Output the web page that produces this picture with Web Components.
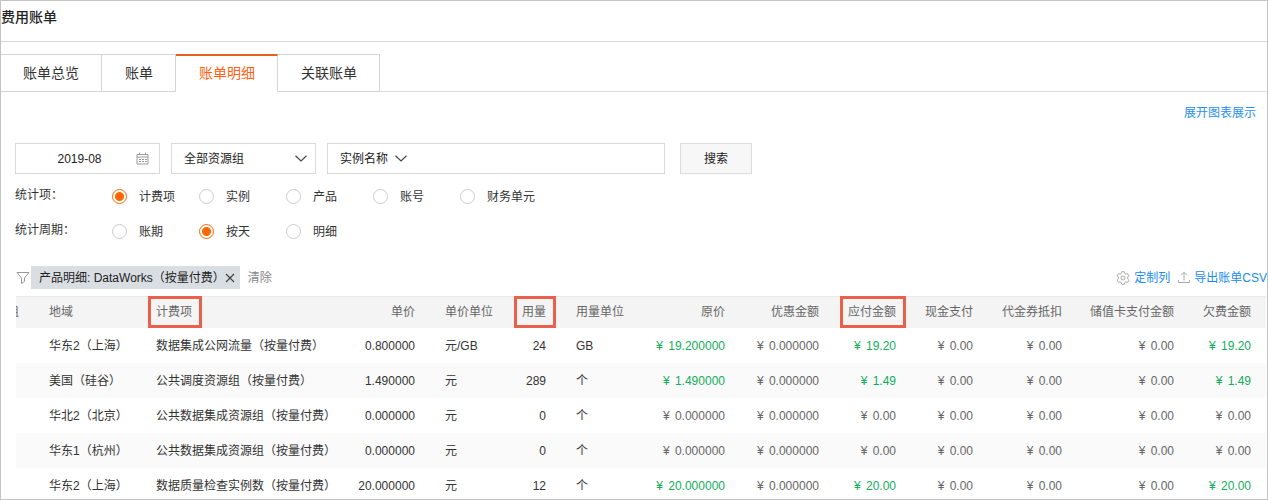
<!DOCTYPE html>
<html lang="zh-CN">
<head>
<meta charset="utf-8">
<title>费用账单</title>
<style>
body {
    margin: 0;
    font: 12px/20px "Liberation Sans", "Noto Sans CJK SC", sans-serif;
    color: #333;
    background: #fff;
}
</style>
</head>
<body>
<bill-page heading="费用账单">
    <bill-tabs slot="tabs">
        <bill-tab>账单总览</bill-tab>
        <bill-tab>账单</bill-tab>
        <bill-tab active>账单明细</bill-tab>
        <bill-tab>关联账单</bill-tab>
    </bill-tabs>
    <bill-search></bill-search>
    <radio-row label="统计项：" name="item" options="计费项,实例,产品,账号,财务单元" value="计费项"></radio-row>
    <radio-row label="统计周期：" name="period" options="账期,按天,明细" value="按天"></radio-row>
    <bill-toolbar>产品明细: DataWorks（按量付费）</bill-toolbar>
    <bill-table></bill-table>
</bill-page>

<script>
function attach(element, html) {
    const templateNode = document.createElement('template');
    templateNode.innerHTML = html;
    const shadowRoot = element.attachShadow({ mode: "open" });
    shadowRoot.appendChild(templateNode.content.cloneNode(true));
    return shadowRoot;
}

class BillPage extends HTMLElement {
    constructor() {
        super();
        const root = attach(this, `
            <style>
            :host {
                display: block;
                box-sizing: border-box;
                height: 100vh;
                border: 1px solid #c4c4c4;
                overflow: hidden;
            }

            h1 {
                margin: 0 0 12px;
                padding: 6px 0 14px;
                border-bottom: 1px solid #d6d6d6;
                font-size: 14px;
                line-height: 20px;
                font-weight: 500;
                color: #222;
            }

            .more {
                display: flex;
                justify-content: flex-end;
                padding: 11px 11px 20px;
            }

            a {
                color: #2a8fee;
                text-decoration: none;
            }

            main {
                padding-left: 14px;
            }
            </style>
            <h1></h1>
            <slot name="tabs"></slot>
            <div class="more"><a href="#chart">展开图表展示</a></div>
            <main><slot></slot></main>
        `);
        root.querySelector('h1').textContent = this.getAttribute('heading');
    }
}

class BillTabs extends HTMLElement {
    constructor() {
        super();
        attach(this, `
            <style>
            :host { display: block; }

            nav {
                display: flex;
                margin-left: -1px;
                background: linear-gradient(#dcdcdc, #dcdcdc) bottom / 100% 1px no-repeat;
            }
            </style>
            <nav><slot></slot></nav>
        `);
    }
}

class BillTab extends HTMLElement {
    constructor() {
        super();
        attach(this, `
            <style>
            :host {
                display: block;
                box-sizing: border-box;
                height: 38px;
                border: solid #d4d4d4;
                border-width: 1px 1px 1px 0;
            }

            :host([active]) {
                border-top: 2px solid #e8601c;
                border-bottom-color: #fff;
                background: #fff;
            }

            a {
                display: block;
                padding: 0 22px 0 23px;
                font-size: 14px;
                line-height: 36px;
                color: #333;
                text-decoration: none;
            }

            :host([active]) a {
                line-height: 34px;
                color: #ff6210;
            }
            </style>
            <a href="#tab"><slot></slot></a>
        `);
    }
}

const CHEVRON = `<svg width="12" height="7" viewBox="0 0 12 7" fill="none" stroke="#444" stroke-width="1.2"><path d="M.5.8 6 6 11.5.8"/></svg>`;

class BillSearch extends HTMLElement {
    constructor() {
        super();
        attach(this, `
            <style>
            :host {
                display: flex;
                gap: 11px;
                margin-bottom: 5px;
            }

            .box {
                box-sizing: border-box;
                display: flex;
                align-items: center;
                width: 145px;
                height: 31px;
                border: 1px solid #d9d9d9;
            }

            .box.wide {
                width: 338px;
            }

            .picker {
                display: grid;
                flex: 1;
                align-items: center;
            }

            .picker > * {
                grid-area: 1 / 1;
            }

            .picker svg {
                justify-self: end;
                margin-right: 8px;
                pointer-events: none;
            }

            .wide .picker {
                flex: none;
                width: 87px;
            }

            input, select, button {
                box-sizing: border-box;
                min-width: 0;
                height: 29px;
                margin: 0;
                padding: 0;
                border: 0;
                outline: 0;
                background: none;
                font: inherit;
                color: #222;
            }

            select {
                appearance: none;
                padding-left: 12px;
            }

            input {
                flex: 1;
            }

            .date input {
                padding-left: 7px;
                text-align: center;
            }

            .date svg {
                margin-right: 10px;
            }

            button {
                width: 72px;
                height: 31px;
                margin-left: 4px;
                border: 1px solid #dcdcdc;
                background: #f7f7f7;
            }
            </style>
            <div class="box date">
                <input type="text" value="2019-08" aria-label="账期">
                <svg width="13" height="13" viewBox="0 0 13 13" fill="none" stroke="#999">
                    <path d="M1 2.5h11v9.5H1zM1 5h11M3.5.5v2M9.5.5v2"/>
                    <path stroke-dasharray="2 1" d="M3 7.5h8M3 9.5h8"/>
                </svg>
            </div>
            <div class="box">
                <div class="picker">
                    <select aria-label="资源组"><option>全部资源组</option></select>
                    ${CHEVRON}
                </div>
            </div>
            <div class="box wide">
                <div class="picker">
                    <select aria-label="搜索字段"><option>实例名称</option></select>
                    ${CHEVRON}
                </div>
                <input type="text" aria-label="实例名称">
            </div>
            <button type="button">搜索</button>
        `);
    }
}

class RadioRow extends HTMLElement {
    constructor() {
        super();
        const name = this.getAttribute('name');
        const value = this.getAttribute('value');
        const radios = this.getAttribute('options').split(',').map(option => `
            <label><input type="radio" name="${name}" ${option === value ? 'checked' : ''}>${option}</label>
        `).join('');

        attach(this, `
            <style>
            :host { display: block; }

            .row {
                display: grid;
                grid-template-columns: 97px repeat(5, 87px);
                height: 35px;
                line-height: 36px;
            }

            .title {
                line-height: 32px;
            }

            label {
                display: flex;
                align-items: center;
                gap: 12px;
                height: 35px;
                white-space: nowrap;
            }

            input {
                appearance: none;
                box-sizing: border-box;
                flex: none;
                width: 15px;
                height: 15px;
                margin: 0;
                border: 1px solid #ccc;
                border-radius: 50%;
            }

            input:checked {
                border-color: #f60;
                background: radial-gradient(circle, #f60 4px, #fff 5px);
            }
            </style>
            <div class="row" role="radiogroup" aria-labelledby="title">
                <span class="title" id="title">${this.getAttribute('label')}</span>
                ${radios}
            </div>
        `);
    }
}

class BillToolbar extends HTMLElement {
    constructor() {
        super();
        attach(this, `
            <style>
            :host {
                display: flex;
                align-items: center;
                margin: 17px 0 7px;
                height: 23px;
                white-space: nowrap;
            }

            svg {
                flex: none;
            }

            .tag {
                display: flex;
                align-items: center;
                margin: 0 8px 0 1px;
                padding: 0 5px 0 8px;
                height: 23px;
                background: #d9dee3;
                color: #222;
            }

            button {
                display: flex;
                margin: 0;
                padding: 0;
                border: 0;
                background: none;
                font: inherit;
                color: #888;
            }

            .actions {
                display: flex;
                gap: 8px;
                margin-left: auto;
            }

            a {
                display: flex;
                align-items: center;
                gap: 4px;
                color: #1a8cf0;
                text-decoration: none;
            }
            </style>
            <svg width="15" height="14" viewBox="0 0 15 14" fill="none" stroke="#999"><path d="M2 1.5h12L9.5 7v3.5l-3 2V7z"/></svg>
            <span class="tag">
                <slot></slot>
                <button type="button" aria-label="移除">
                    <svg width="10" height="10" viewBox="0 0 10 10" stroke="#444" stroke-width="1.2"><path d="M1 1l8 8M9 1 1 9"/></svg>
                </button>
            </span>
            <button type="button">清除</button>
            <div class="actions">
                <a href="#columns">
                    <svg width="14" height="14" viewBox="0 0 14 14" fill="none" stroke="#aaa" stroke-linejoin="round">
                        <path d="M5.7.7h2.6l.4 1.7 1.2.7 1.7-.5 1.3 2.2L11.7 6v2l1.2 1.2-1.3 2.2-1.7-.5-1.2.7-.4 1.7H5.7l-.4-1.7-1.2-.7-1.7.5-1.3-2.2L2.3 8V6L1.1 4.800l1.3-2.2 1.7.5 1.2-.7z"/>
                        <circle cx="7" cy="7" r="2"/>
                    </svg>定制列</a>
                <a href="#export">
                    <svg width="12" height="13" viewBox="0 0 12 13" fill="none" stroke="#aaa"><path d="M6 9.5v-8M3 4.3l3-3 3 3M.5 9v2.5h11V9"/></svg>导出账单CSV</a>
            </div>
        `);
    }
}

// title, width, class
const COLUMNS = [
    ['组', 18, 'cut'],
    ['地域', 107],
    ['计费项', 199, 'mark'],
    ['单价', 90, 'num'],
    ['单价单位', 78],
    ['用量', 53, 'num mark'],
    ['用量单位', 78],
    ['原价', 101, 'num money'],
    ['优惠金额', 94, 'num money'],
    ['应付金额', 77, 'num money mark'],
    ['现金支付', 77, 'num money'],
    ['代金券抵扣', 89, 'num money'],
    ['储值卡支付金额', 112, 'num money'],
    ['欠费金额', 77, 'num money'],
];

const ROWS = [
    ['', '华东2（上海）', '数据集成公网流量（按量付费）', '0.800000', '元/GB', '24', 'GB', '19.200000', '0.000000', '19.20', '0.00', '0.00', '0.00', '19.20'],
    ['', '美国（硅谷）', '公共调度资源组（按量付费）', '1.490000', '元', '289', '个', '1.490000', '0.000000', '1.49', '0.00', '0.00', '0.00', '1.49'],
    ['', '华北2（北京）', '公共数据集成资源组（按量付费）', '0.000000', '元', '0', '个', '0.000000', '0.000000', '0.00', '0.00', '0.00', '0.00', '0.00'],
    ['', '华东1（杭州）', '公共数据集成资源组（按量付费）', '0.000000', '元', '0', '个', '0.000000', '0.000000', '0.00', '0.00', '0.00', '0.00', '0.00'],
    ['', '华东2（上海）', '数据质量检查实例数（按量付费）', '20.000000', '元', '12', '个', '20.000000', '0.000000', '20.00', '0.00', '0.00', '0.00', '20.00'],
];

function cell(text, index) {
    const cls = COLUMNS[index][2] || '';
    if (!cls.includes('money')) {
        return `<td class="${cls}">${text}</td>`;
    }
    const due = Number(text) > 0 ? 'due' : '';
    return `<td class="${cls} ${due}"><span class="yen">¥ </span>${text}</td>`;
}

class BillTable extends HTMLElement {
    constructor() {
        super();
        attach(this, `
            <style>
            :host {
                display: block;
                margin: 0 1px;
            }

            table {
                width: 100%;
                table-layout: fixed;
                border-collapse: collapse;
            }

            th, td {
                box-sizing: border-box;
                padding: 0 0 0 15px;
                height: 35px;
                line-height: 16px;
                text-align: left;
                white-space: nowrap;
            }

            th {
                height: 32px;
                background: #f4f4f4;
                box-shadow: inset 0 1px #e9e9e9;
                font-weight: normal;
                color: #666;
            }

            .num {
                padding: 0 15px 0 0;
                text-align: right;
            }

            .cut {
                padding: 0 15px 0 0;
            }

            .cut span {
                display: flex;
                justify-content: flex-end;
                overflow: hidden;
            }

            th.mark span {
                position: relative;
                display: inline-block;
            }

            th.mark span::after {
                content: "";
                position: absolute;
                inset: -8px -10px -8px -8px;
                border: 3px solid #e9614a;
            }

            tbody tr:nth-child(even) {
                background: #fafafa;
            }

            .money {
                color: #666;
            }

            .due {
                color: #12ad5b;
            }

            .yen {
                margin-right: 2px;
            }
            </style>
            <table>
                <colgroup>${COLUMNS.map(([, width]) => `<col style="width: ${width}px">`).join('')}</colgroup>
                <thead>
                    <tr>${COLUMNS.map(([title, , cls]) => `<th class="${cls || ''}"><span>${title}</span></th>`).join('')}</tr>
                </thead>
                <tbody>
                    ${ROWS.map(row => `<tr>${row.map(cell).join('')}</tr>`).join('')}
                </tbody>
            </table>
        `);
    }
}

customElements.define("bill-page", BillPage);
customElements.define("bill-tabs", BillTabs);
customElements.define("bill-tab", BillTab);
customElements.define("bill-search", BillSearch);
customElements.define("radio-row", RadioRow);
customElements.define("bill-toolbar", BillToolbar);
customElements.define("bill-table", BillTable);
</script>
</body>
</html>
